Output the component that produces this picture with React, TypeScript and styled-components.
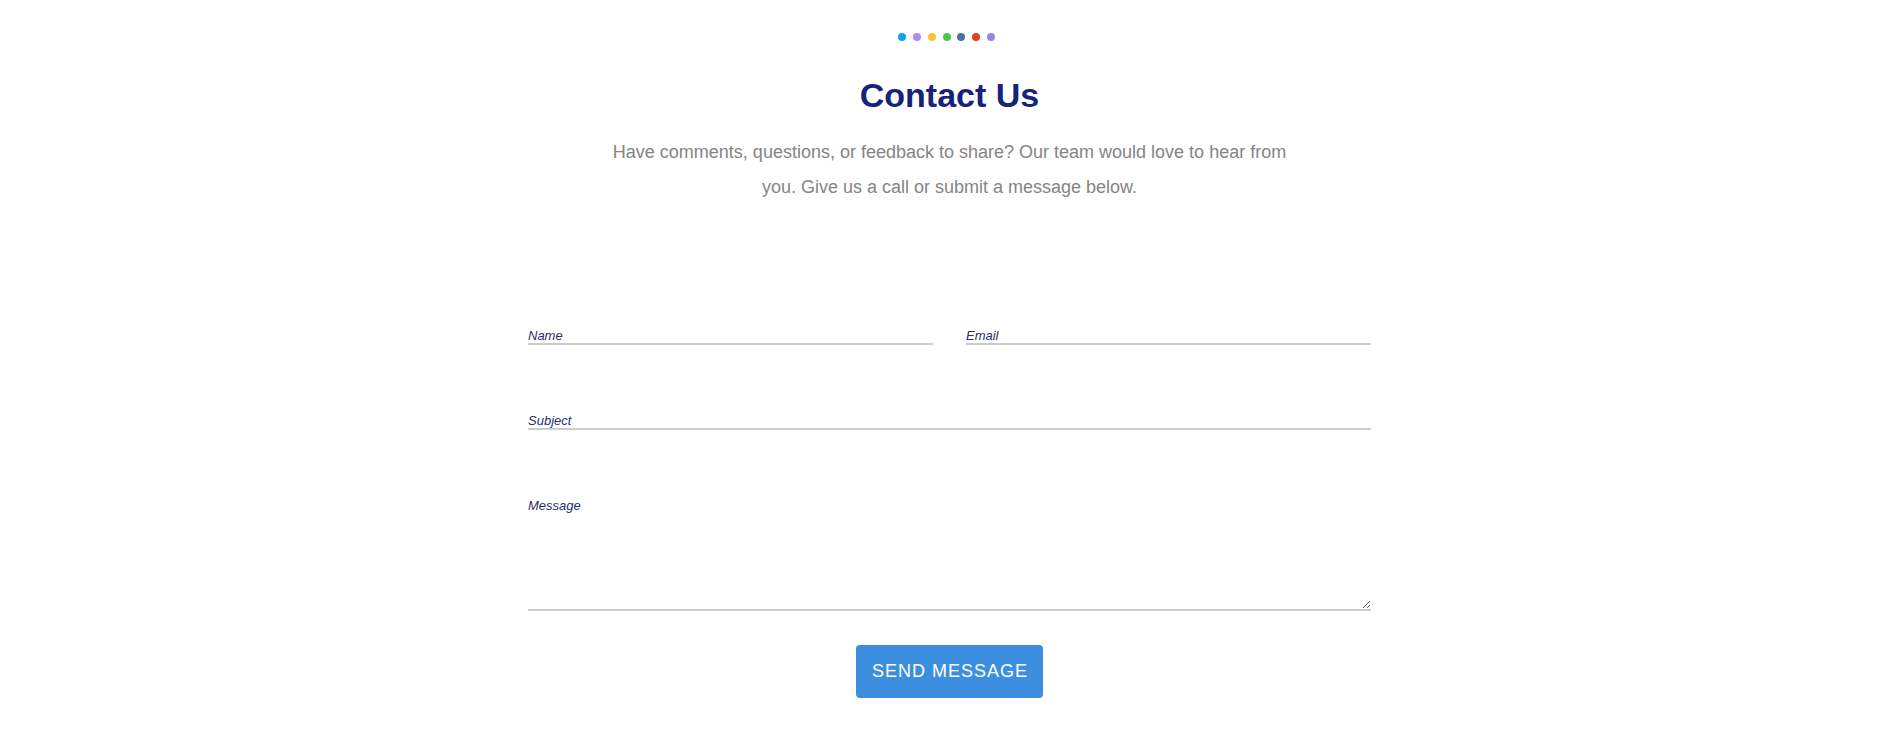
import React from "react";
import styled, { createGlobalStyle } from "styled-components";

const GlobalStyle = createGlobalStyle`
  html, body {
    margin: 0;
    padding: 0;
    background: #ffffff;
  }
  body {
    font-family: "Liberation Sans", Arial, sans-serif;
  }
  * { box-sizing: border-box; }
`;

const Page = styled.main`
  display: flex;
  flex-direction: column;
  align-items: center;
  padding: 33px 0 40px 9px;
  font-family: "Liberation Sans", Arial, sans-serif;
`;

const Dots = styled.div`
  display: flex;
  gap: 6.7px;
  margin-right: 6px;
`;

const Dot = styled.span<{ $color: string }>`
  width: 8px;
  height: 8px;
  border-radius: 50%;
  background: ${(p) => p.$color};
`;

const Title = styled.h1`
  margin: 35px 0 0;
  font-size: 34px;
  line-height: 38px;
  font-weight: 700;
  color: #16237a;
`;

const Intro = styled.p`
  margin: 21px 0 0;
  max-width: 700px;
  font-size: 18px;
  line-height: 35px;
  color: #858585;
  text-align: center;
`;

const Form = styled.form`
  margin-top: 123px;
  width: 843px;
  display: grid;
  grid-template-columns: 1fr 1fr;
  column-gap: 33px;
  row-gap: 68px;
`;

const fieldStyles = `
  display: block;
  width: 100%;
  margin: 0;
  padding: 0;
  border: none;
  border-bottom: 2px solid #cccccc;
  border-radius: 0;
  background: transparent;
  outline: none;
  font-family: "Liberation Sans", Arial, sans-serif;
  font-size: 13px;
  color: #2b2e6c;
  &::placeholder {
    color: #2b2e6c;
    font-style: italic;
    opacity: 1;
  }
`;

const Field = styled.input<{ $wide?: boolean }>`
  ${fieldStyles}
  height: 17px;
  grid-column: ${(p) => (p.$wide ? "1 / -1" : "auto")};
`;

const MessageArea = styled.textarea`
  ${fieldStyles}
  grid-column: 1 / -1;
  height: 113px;
  line-height: normal;
  resize: both;
`;

const ButtonRow = styled.div`
  grid-column: 1 / -1;
  display: flex;
  justify-content: center;
  margin-top: -34px;
`;

const SendButton = styled.button`
  height: 53px;
  padding: 0 15px 0 16px;
  border: none;
  border-radius: 4px;
  background: #3c8fe0;
  color: #ffffff;
  font-family: "Liberation Sans", Arial, sans-serif;
  font-size: 18px;
  letter-spacing: 1px;
  text-transform: uppercase;
  cursor: pointer;
`;

const dotColors = ["#0ea5f0", "#a88cf0", "#f7c234", "#4cc44a", "#4a73a5", "#e4411b", "#9b84e0"];

export default function App() {
  return (
    <>
      <GlobalStyle />
      <Page>
        <Dots>
          {dotColors.map((c) => (
            <Dot key={c} $color={c} />
          ))}
        </Dots>
        <Title>Contact Us</Title>
        <Intro>
          Have comments, questions, or feedback to share? Our team would love to hear from you. Give us a call or
          submit a message below.
        </Intro>
        <Form onSubmit={(e) => e.preventDefault()}>
          <Field type="text" placeholder="Name" />
          <Field type="email" placeholder="Email" />
          <Field type="text" placeholder="Subject" $wide />
          <MessageArea placeholder="Message" />
          <ButtonRow>
            <SendButton type="submit">Send Message</SendButton>
          </ButtonRow>
        </Form>
      </Page>
    </>
  );
}
